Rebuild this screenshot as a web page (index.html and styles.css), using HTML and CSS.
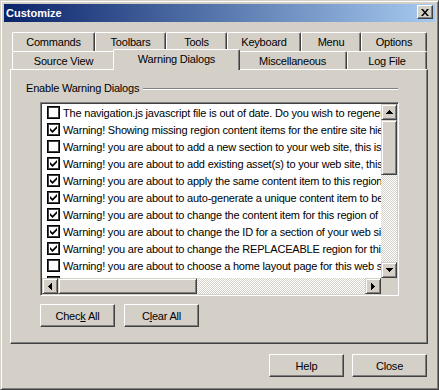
FILE: index.html
```html
<!DOCTYPE html>
<html lang="en">
<head>
    <meta charset="UTF-8">
    <title>Customize</title>
    <link rel="stylesheet" href="styles.css">
</head>
<body>

<div class="window">
    <!-- Title bar -->
    <div class="titlebar">
        <span class="title">Customize</span>
        <button class="title-close" aria-label="Close">
            <svg width="8" height="7" viewBox="0 0 8 7"><path d="M0 0h2l2 2.4L6 0h2L5 3.5 8 7H6L4 4.6 2 7H0l3-3.5z"/></svg>
        </button>
    </div>

    <div class="client">
        <div class="tabs">
            <!-- back row of tabs -->
            <div class="tab-row">
                <div class="tab tab-commands">Commands</div>
                <div class="tab tab-toolbars">Toolbars</div>
                <div class="tab tab-tools">Tools</div>
                <div class="tab tab-keyboard">Keyboard</div>
                <div class="tab tab-menu">Menu</div>
                <div class="tab tab-options">Options</div>
            </div>
            <!-- front row of tabs -->
            <div class="tab-row tab-row-front">
                <div class="tab tab-source">Source View</div>
                <div class="tab tab-warnings active">Warning Dialogs</div>
                <div class="tab tab-misc">Miscellaneous</div>
                <div class="tab tab-log">Log File</div>
            </div>

            <div class="tab-panel">
                <div class="group-title">
                    <span>Enable Warning Dialogs</span>
                    <span class="etch"></span>
                </div>

                <div class="listbox">
                    <div class="list-view">
                        <div class="row"><span class="check"></span><span class="row-text">The navigation.js javascript file is out of date. Do you wish to regenerate it now?</span></div>
                        <div class="row"><span class="check on"><svg width="7" height="7" viewBox="0 0 7 7"><polygon points="0,2 2.5,4.5 7,0 7,2.6 2.5,7 0,4.6"/></svg></span><span class="row-text">Warning! Showing missing region content items for the entire site hierarchy may take a while.</span></div>
                        <div class="row"><span class="check"></span><span class="row-text">Warning! you are about to add a new section to your web site, this is permanent.</span></div>
                        <div class="row"><span class="check on"><svg width="7" height="7" viewBox="0 0 7 7"><polygon points="0,2 2.5,4.5 7,0 7,2.6 2.5,7 0,4.6"/></svg></span><span class="row-text">Warning! you are about to add existing asset(s) to your web site, this will copy them.</span></div>
                        <div class="row"><span class="check on"><svg width="7" height="7" viewBox="0 0 7 7"><polygon points="0,2 2.5,4.5 7,0 7,2.6 2.5,7 0,4.6"/></svg></span><span class="row-text">Warning! you are about to apply the same content item to this region on every page.</span></div>
                        <div class="row"><span class="check on"><svg width="7" height="7" viewBox="0 0 7 7"><polygon points="0,2 2.5,4.5 7,0 7,2.6 2.5,7 0,4.6"/></svg></span><span class="row-text">Warning! you are about to auto-generate a unique content item to be used here.</span></div>
                        <div class="row"><span class="check on"><svg width="7" height="7" viewBox="0 0 7 7"><polygon points="0,2 2.5,4.5 7,0 7,2.6 2.5,7 0,4.6"/></svg></span><span class="row-text">Warning! you are about to change the content item for this region of the page.</span></div>
                        <div class="row"><span class="check on"><svg width="7" height="7" viewBox="0 0 7 7"><polygon points="0,2 2.5,4.5 7,0 7,2.6 2.5,7 0,4.6"/></svg></span><span class="row-text">Warning! you are about to change the ID for a section of your web site.</span></div>
                        <div class="row"><span class="check on"><svg width="7" height="7" viewBox="0 0 7 7"><polygon points="0,2 2.5,4.5 7,0 7,2.6 2.5,7 0,4.6"/></svg></span><span class="row-text">Warning! you are about to change the REPLACEABLE region for this layout.</span></div>
                        <div class="row"><span class="check"></span><span class="row-text">Warning! you are about to choose a home layout page for this web site.</span></div>
                        <div class="row"><span class="check"></span><span class="row-text">Warning! you are about to delete a content item from your web site.</span></div>
                    </div>

                    <div class="vscroll">
                        <div class="sb-btn"><svg width="7" height="4" viewBox="0 0 7 4"><path d="M3 0h1v1h1v1h1v1h1v1H0V3h1V2h1V1h1z"/></svg></div>
                        <div class="sb-thumb sb-thumb-v"></div>
                        <div class="sb-track"></div>
                        <div class="sb-btn"><svg width="7" height="4" viewBox="0 0 7 4"><path d="M0 0h7v1H6v1H5v1H4v1H3V3H2V2H1V1H0z"/></svg></div>
                    </div>
                    <div class="hscroll">
                        <div class="sb-btn"><svg width="4" height="7" viewBox="0 0 4 7"><path d="M0 3h1V2h1V1h1V0h1v7H3V6H2V5H1V4H0z"/></svg></div>
                        <div class="sb-thumb sb-thumb-h"></div>
                        <div class="sb-track"></div>
                        <div class="sb-btn"><svg width="4" height="7" viewBox="0 0 4 7"><path d="M0 0h1v1h1v1h1v1h1v1H3v1H2v1H1v1H0z"/></svg></div>
                    </div>
                    <div class="sb-corner"></div>
                </div>

                <div class="panel-buttons">
                    <button class="btn">Chec<u>k</u> All</button>
                    <button class="btn">C<u>l</u>ear All</button>
                </div>
            </div>
        </div>

        <div class="dialog-buttons">
            <button class="btn">Help</button>
            <button class="btn">Close</button>
        </div>
    </div>
</div>

</body>
</html>
```

FILE: styles.css
```css
body {
    margin: 0;
    font-family: "Liberation Sans", Arial, sans-serif;
    font-size: 11px;
    letter-spacing: -0.2px;
    color: #000;
    background-color: #d4d0c8;
}

.window {
    width: 439px;
    height: 390px;
    box-sizing: border-box;
    padding: 3px;
    background-color: #d4d0c8;
    border: 1px solid;
    border-color: #d4d0c8 #404040 #404040 #d4d0c8;
    box-shadow: inset 1px 1px #fff, inset -1px -1px #808080;
}

/* Title bar */
.titlebar {
    height: 18px;
    display: flex;
    justify-content: space-between;
    align-items: flex-start;
    background: linear-gradient(to right, #0a246a, #a6caf0);
}

.title {
    color: #fff;
    font-weight: bold;
    line-height: 18px;
    padding-left: 2px;
    letter-spacing: 0;
}

.title-close {
    width: 16px;
    height: 14px;
    margin: 1px 2px 0 0;
    padding: 0;
    display: flex;
    align-items: center;
    justify-content: center;
    box-sizing: border-box;
    background-color: #d4d0c8;
    border: 1px solid;
    border-color: #fff #404040 #404040 #fff;
    box-shadow: inset -1px -1px #808080;
}

.client {
    padding: 10px 0 0 6px;
}

/* Tabs */
.tabs {
    width: 418px;
}

.tab-row {
    display: flex;
    padding-left: 2px;
    height: 19px;
}

.tab-row-front {
    height: 18px;
}

.tab {
    flex: none;
    height: 100%;
    box-sizing: border-box;
    display: flex;
    align-items: center;
    justify-content: center;
    background-color: #d4d0c8;
    border-top: 1px solid #fff;
    border-left: 1px solid #fff;
    border-right: 1px solid #404040;
    border-radius: 2px 2px 0 0;
    box-shadow: inset -1px 0 #808080;
    white-space: nowrap;
}

.tab-commands { width: 83px; }
.tab-toolbars { width: 71px; }
.tab-tools { width: 61px; }
.tab-keyboard { width: 74px; }
.tab-menu { width: 60px; }
.tab-options { width: 66px; }

.tab-source { width: 103px; }
.tab-warnings { width: 123px; }
.tab-misc { width: 109px; }
.tab-log { width: 80px; }

.tab.active {
    position: relative;
    z-index: 1;
    width: 127px;
    height: 21px;
    margin: -2px -2px 0 -2px;
    padding-bottom: 2px;
}

.tab-panel {
    height: 275px;
    box-sizing: border-box;
    border: 1px solid;
    border-color: #fff #404040 #404040 #fff;
    box-shadow: inset -1px -1px #808080;
}

.group-title {
    display: flex;
    align-items: center;
    margin: 12px 29px 0 15px;
    line-height: 13px;
}

.etch {
    flex: 1;
    margin-left: 4px;
    border-top: 1px solid #808080;
    border-bottom: 1px solid #fff;
}

/* List with checkboxes */
.listbox {
    width: 359px;
    height: 194px;
    margin: 7px 0 0 29px;
    box-sizing: border-box;
    display: grid;
    grid-template-columns: 1fr 16px;
    grid-template-rows: 1fr 16px;
    border: 1px solid;
    border-color: #808080 #fff #fff #808080;
    box-shadow: inset 1px 1px #404040, inset -1px -1px #d4d0c8;
    padding: 1px;
}

.list-view {
    background-color: #fff;
    overflow: hidden;
}

.row {
    height: 17px;
    display: flex;
    align-items: center;
    padding-left: 5px;
    white-space: nowrap;
}

.check {
    flex: none;
    width: 13px;
    height: 13px;
    box-sizing: border-box;
    border: 1px solid #000;
    box-shadow: inset 0 0 0 1px #404040;
    display: flex;
    align-items: center;
    justify-content: center;
    background-color: #fff;
}

.row-text {
    margin-left: 3px;
}

/* Scrollbars */
.vscroll {
    display: flex;
    flex-direction: column;
}

.hscroll {
    display: flex;
}

.sb-btn,
.sb-thumb {
    flex: none;
    box-sizing: border-box;
    background-color: #d4d0c8;
    border: 1px solid;
    border-color: #d4d0c8 #404040 #404040 #d4d0c8;
    box-shadow: inset 1px 1px #fff, inset -1px -1px #808080;
}

.sb-btn {
    width: 16px;
    height: 16px;
    display: flex;
    align-items: center;
    justify-content: center;
}

.sb-thumb-v {
    height: 55px;
}

.sb-thumb-h {
    width: 139px;
}

.sb-track {
    flex: 1;
    background: repeating-conic-gradient(#fff 0 25%, #d4d0c8 0 50%) 0 0 / 2px 2px;
}

.sb-corner {
    background-color: #d4d0c8;
}

/* Buttons */
.btn {
    width: 75px;
    height: 23px;
    padding: 0;
    box-sizing: border-box;
    font-family: inherit;
    font-size: 11px;
    letter-spacing: -0.2px;
    color: #000;
    background-color: #d4d0c8;
    border: 1px solid;
    border-color: #fff #404040 #404040 #fff;
    box-shadow: inset -1px -1px #808080;
}

.panel-buttons {
    display: flex;
    gap: 9px;
    margin: 8px 0 0 29px;
}

.dialog-buttons {
    width: 418px;
    display: flex;
    justify-content: flex-end;
    gap: 8px;
    margin-top: 10px;
    padding-right: 1px;
    box-sizing: border-box;
}
```
